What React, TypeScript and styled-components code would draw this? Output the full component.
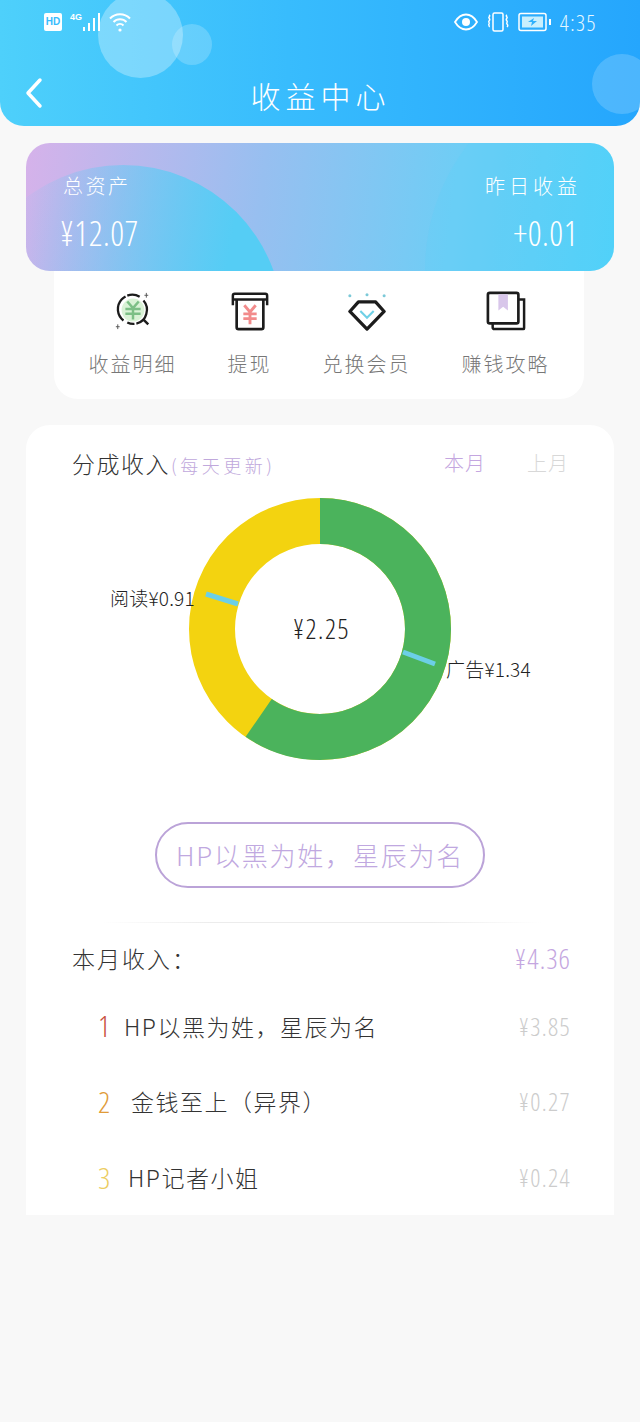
import React from 'react';
import styled, { createGlobalStyle } from 'styled-components';

const GlobalStyle = createGlobalStyle`
  html, body {
    margin: 0;
    padding: 0;
    background: #f8f8f8;
  }
  * {
    box-sizing: border-box;
  }
`;

const tabs = ['收益明细', '提现', '兑换会员', '赚钱攻略'];

const rows = [
  { rank: 1, color: '#c9523e', width: 26, title: 'HP以黑为姓，星辰为名', amount: '¥3.85' },
  { rank: 2, color: '#e09b38', width: 33, title: '金钱至上（异界）', amount: '¥0.27' },
  { rank: 3, color: '#eccd62', width: 30, title: 'HP记者小姐', amount: '¥0.24' },
];

const TabIcon = ({ index }: { index: number }) => {
  if (index === 0) {
    return (
      <svg width="40" height="40" viewBox="0 0 42 42" fill="none">
        <circle cx="21" cy="20" r="12" fill="#d9f2d6" />
        <path d="M15 11l6 7 6-7M13 19h16M13 24h16M21 18v12" stroke="#7cbf86" strokeWidth="2.6" />
        <path d="M32 10a15 15 0 0 1 3 14 14 14 0 0 1-20 9M11 31a15 15 0 0 1-2-22 15 15 0 0 1 19-3" stroke="#1c1c1c" strokeWidth="2.4" strokeDasharray="30 2 40 2" />
        <path d="M32 30l5 5" stroke="#1c1c1c" strokeWidth="2.6" />
        <path d="M35 2v5M33 4.500h4M5 35v5M3 37.500h4" stroke="#555" strokeWidth="1" />
      </svg>
    );
  }
  if (index === 1) {
    return (
      <svg width="40" height="40" viewBox="0 0 42 42" fill="none">
        <path d="M3 15V5a2 2 0 0 1 2-2h32a2 2 0 0 1 2 2v10" stroke="#1c1c1c" strokeWidth="2.6" />
        <path d="M4 9h34" stroke="#1c1c1c" strokeWidth="2.6" />
        <path d="M7 9v29a2 2 0 0 0 2 2h24a2 2 0 0 0 2-2V9" stroke="#1c1c1c" strokeWidth="2.8" />
        <path d="M15 15l6 7 6-7M14 24h14M14 29h14M21 22v13" stroke="#f28b8b" strokeWidth="3" />
      </svg>
    );
  }
  if (index === 2) {
    return (
      <svg width="40" height="40" viewBox="0 0 42 42" fill="none">
        <circle cx="3" cy="5" r="1.600" fill="#7cc9d8" />
        <circle cx="21" cy="4" r="1.600" fill="#7cc9d8" />
        <circle cx="39" cy="5" r="1.600" fill="#7cc9d8" />
        <path d="M12 11.500h18l9 10-18 18.500L3 21.500z" stroke="#1c1c1c" strokeWidth="3.400" strokeLinejoin="round" />
        <path d="M14 21l7 7 7-7" stroke="#6fd0e6" strokeWidth="2.2" />
      </svg>
    );
  }
  return (
    <svg width="40" height="40" viewBox="0 0 42 42" fill="none">
      <path d="M34 9h6v30a1 1 0 0 1-1 1H9a2 2 0 0 1-2-2v-4" stroke="#1c1c1c" strokeWidth="2.6" />
      <rect x="2" y="2" width="32" height="32" rx="2" stroke="#1c1c1c" strokeWidth="2.8" />
      <path d="M13 3.500v17l5-4 5 4V3.500z" fill="#d8c6ea" />
    </svg>
  );
};

const App = () => (
  <Page>
    <GlobalStyle />
    <Header>
      <BubbleLarge />
      <BubbleSmall />
      <BubbleEdge />
      <StatusBar>
        <StatusGroup>
          <HdBadge>HD</HdBadge>
          <NetworkLabel>4G</NetworkLabel>
          <svg width="20" height="20" viewBox="0 0 20 20" fill="#fff">
            <rect x="1" y="15" width="2" height="4" />
            <rect x="6" y="11" width="2" height="8" />
            <rect x="11" y="6" width="2" height="13" />
            <rect x="16" y="1" width="2" height="18" />
          </svg>
          <svg width="24" height="22" viewBox="0 0 24 22" fill="none" stroke="#fff" strokeWidth="2">
            <path d="M2 7.500a14 14 0 0 1 20 0M5.500 11a9 9 0 0 1 13 0M8.500 14.500a5 5 0 0 1 7 0" />
            <circle cx="12" cy="19" r="1.600" fill="#fff" stroke="none" />
          </svg>
        </StatusGroup>
        <StatusGroup $wide>
          <svg width="24" height="18" viewBox="0 0 24 18" fill="none" stroke="#fff" strokeWidth="1.800">
            <path d="M1 9c3-5 7-7.500 11-7.500S20 4 23 9c-3 5-7 7.500-11 7.500S4 14 1 9z" />
            <circle cx="12" cy="9" r="4" fill="#fff" stroke="none" />
          </svg>
          <svg width="24" height="20" viewBox="0 0 24 20" fill="none" stroke="#fff" strokeWidth="1.500">
            <rect x="7" y="1" width="10" height="18" rx="1.500" />
            <path d="M3 3c2 1-1 2 0 3s1 2 0 3 1 2 0 3 1 2 0 3M21 3c-2 1 1 2 0 3s-1 2 0 3-1 2 0 3 1 2 0 3" />
          </svg>
          <svg width="34" height="20" viewBox="0 0 34 20" fill="none">
            <rect x="1" y="1.500" width="27" height="17" rx="2" stroke="#fff" strokeWidth="1.500" />
            <rect x="4" y="4.500" width="21" height="11" fill="#c9effd" />
            <path d="M10 10l6-4-1 3h4l-6 5 1-4z" fill="#2fb0fc" />
            <rect x="31" y="7" width="2" height="6" fill="#fff" />
          </svg>
          <Clock>4:35</Clock>
        </StatusGroup>
      </StatusBar>
      <NavBar>
        <BackButton>
          <svg width="20" height="32" viewBox="0 0 20 32" fill="none" stroke="#fff" strokeWidth="3.500" strokeLinecap="round" strokeLinejoin="round">
            <path d="M16 3L4 16l12 13" />
          </svg>
        </BackButton>
        <NavTitle>收益中心</NavTitle>
      </NavBar>
    </Header>

    <BalanceCard>
      <BalanceColumn>
        <BalanceLabel>总资产</BalanceLabel>
        <BalanceValue>¥12.07</BalanceValue>
      </BalanceColumn>
      <BalanceColumn $right>
        <BalanceLabel $wide>昨日收益</BalanceLabel>
        <BalanceValue>+0.01</BalanceValue>
      </BalanceColumn>
    </BalanceCard>

    <TabCard>
      {tabs.map((tab, index) => (
        <TabItem key={tab}>
          <TabIcon index={index} />
          <TabLabel>{tab}</TabLabel>
        </TabItem>
      ))}
    </TabCard>

    <IncomePanel>
      <PanelHeader>
        <PanelTitle>
          分成收入<PanelHint>(每天更新)</PanelHint>
        </PanelTitle>
        <MonthSwitch>
          <MonthOption $active>本月</MonthOption>
          <MonthOption>上月</MonthOption>
        </MonthSwitch>
      </PanelHeader>

      <Chart>
        <svg width="264" height="264" viewBox="0 0 264 264">
          <circle cx="132" cy="132" r="108" fill="none" stroke="#f3d310" strokeWidth="46" />
          <circle
            cx="132"
            cy="132"
            r="108"
            fill="none"
            stroke="#4bb35c"
            strokeWidth="46"
            strokeDasharray={`${2 * Math.PI * 108 * (1.34 / 2.25)} ${2 * Math.PI * 108}`}
            transform="rotate(-90 132 132)"
          />
          <path d="M215 155l32 12M50 107L18 97" stroke="#6ccfe6" strokeWidth="5" />
        </svg>
        <ChartTotal>¥2.25</ChartTotal>
        <ChartLabel $left="-78px" $top="88px">阅读¥0.91</ChartLabel>
        <ChartLabel $left="258px" $top="159px">广告¥1.34</ChartLabel>
      </Chart>

      <AuthorPill>HP以黑为姓，星辰为名</AuthorPill>
      <Divider />

      <TotalRow>
        <TotalLabel>本月收入：</TotalLabel>
        <TotalAmount>¥4.36</TotalAmount>
      </TotalRow>

      {rows.map(row => (
        <BookRow key={row.rank}>
          <BookName>
            <Rank $color={row.color} $width={row.width}>{row.rank}</Rank>
            <BookTitle>{row.title}</BookTitle>
          </BookName>
          <BookAmount>{row.amount}</BookAmount>
        </BookRow>
      ))}
    </IncomePanel>
  </Page>
);

export default App;

const fontStack = `"Noto Sans CJK SC", sans-serif`;
const numberStack = `"Open Sans", "Noto Sans CJK SC", sans-serif`;

const Page = styled.div`
  width: 640px;
  min-height: 1422px;
  background: #f8f8f8;
  font-family: ${fontStack};
  font-weight: 300;
  display: flex;
  flex-direction: column;
`;

const Header = styled.header`
  position: relative;
  height: 126px;
  overflow: hidden;
  border-radius: 0 0 24px 24px;
  background: linear-gradient(90deg, #4ed0fb 0%, #38bcfd 45%, #25a6fd 100%);
`;

const BubbleLarge = styled.div`
  position: absolute;
  left: 98px;
  top: -8px;
  width: 85px;
  height: 86px;
  border-radius: 50%;
  background: rgba(255, 255, 255, 0.3);
`;

const BubbleSmall = styled.div`
  position: absolute;
  left: 172px;
  top: 24px;
  width: 40px;
  height: 41px;
  border-radius: 50%;
  background: rgba(255, 255, 255, 0.2);
`;

const BubbleEdge = styled.div`
  position: absolute;
  left: 592px;
  top: 54px;
  width: 60px;
  height: 60px;
  border-radius: 50%;
  background: rgba(255, 255, 255, 0.18);
`;

const StatusBar = styled.div`
  position: relative;
  height: 44px;
  padding: 0 44px;
  display: flex;
  align-items: center;
  justify-content: space-between;
`;

const StatusGroup = styled.div<{ $wide?: boolean }>`
  display: flex;
  align-items: center;
  gap: ${p => (p.$wide ? '8px' : '6px')};
`;

const HdBadge = styled.span`
  width: 18px;
  height: 18px;
  border-radius: 2px;
  background: #fff;
  color: #38bcfd;
  font: 700 10px/18px "Liberation Sans", sans-serif;
  text-align: center;
`;

const NetworkLabel = styled.span`
  align-self: flex-start;
  margin: 0 -6px 0 2px;
  color: #fff;
  font: 700 9px/12px "Liberation Sans", sans-serif;
`;

const Clock = styled.span`
  margin-right: -1px;
  color: #e6f7ff;
  font-family: ${numberStack};
  font-stretch: 75%;
  font-size: 22px;
  line-height: 24px;
  letter-spacing: 1.500px;
`;

const NavBar = styled.div`
  position: relative;
  height: 60px;
  margin-top: 21px;
  display: flex;
  align-items: center;
  justify-content: center;
`;

const BackButton = styled.div`
  position: absolute;
  left: 24px;
  top: 12px;
  display: flex;
`;

const NavTitle = styled.h1`
  margin: 0 0 0 1px;
  color: #fff;
  font-size: 30px;
  font-weight: 300;
  letter-spacing: 5px;
  line-height: 44px;
`;

const BalanceCard = styled.section`
  position: relative;
  overflow: hidden;
  height: 128px;
  margin: 17px 26px 0;
  padding: 26px 36px 0 34px;
  border-radius: 24px;
  display: flex;
  justify-content: space-between;
  background: linear-gradient(97deg, #d6b2ea 0%, #97bff0 40%, #6fcdf5 72%, #50d1f9 100%);
  &::before {
    content: '';
    position: absolute;
    left: -63px;
    top: 22px;
    width: 320px;
    height: 320px;
    border-radius: 50%;
    background: linear-gradient(100deg, rgba(85, 205, 245, 0) 15%, #55cdf5 75%);
  }
  &::after {
    content: '';
    position: absolute;
    left: 399px;
    top: -78px;
    width: 410px;
    height: 410px;
    border-radius: 50%;
    background: rgba(85, 208, 248, 0.2);
  }
`;

const BalanceColumn = styled.div<{ $right?: boolean }>`
  position: relative;
  z-index: 1;
  display: flex;
  flex-direction: column;
  gap: 12px;
  align-items: ${p => (p.$right ? 'flex-end' : 'flex-start')};
  color: #fff;
`;

const BalanceLabel = styled.div<{ $wide?: boolean }>`
  margin: ${p => (p.$wide ? '0 -3px 0 0' : '0 0 0 3px')};
  font-size: 20px;
  line-height: 34px;
  letter-spacing: ${p => (p.$wide ? '4px' : '2.500px')};
`;

const BalanceValue = styled.div`
  font-family: ${numberStack};
  font-stretch: 75%;
  font-size: 34px;
  line-height: 36px;
  letter-spacing: 0.500px;
`;

const TabCard = styled.section`
  height: 128px;
  margin: 0 56px 0 54px;
  padding-top: 20px;
  background: #fff;
  border-radius: 0 0 24px 24px;
  display: flex;
  justify-content: center;
  gap: 51px;
`;

const TabItem = styled.div`
  display: flex;
  flex-direction: column;
  align-items: center;
  gap: 18px;
`;

const TabLabel = styled.div`
  color: #777;
  font-size: 20px;
  line-height: 30px;
  letter-spacing: 2px;
`;

const IncomePanel = styled.section`
  height: 790px;
  margin: 26px 26px 0;
  padding: 18px 43px 0 46px;
  background: #fff;
  border-radius: 24px 24px 0 0;
  display: flex;
  flex-direction: column;
`;

const PanelHeader = styled.div`
  height: 40px;
  display: flex;
  align-items: center;
  justify-content: space-between;
`;

const PanelTitle = styled.div`
  color: #333;
  font-size: 23px;
  letter-spacing: 1.500px;
`;

const PanelHint = styled.span`
  margin-left: 1px;
  color: #c0a8dc;
  font-size: 18px;
  letter-spacing: 3.500px;
`;

const MonthSwitch = styled.div`
  padding-right: 2px;
  display: flex;
  gap: 41px;
`;

const MonthOption = styled.span<{ $active?: boolean }>`
  color: ${p => (p.$active ? '#c4a6e0' : '#d8d8d8')};
  font-size: 20px;
  letter-spacing: 1px;
`;

const Chart = styled.div`
  position: relative;
  width: 264px;
  height: 264px;
  margin: 14px 0 0 116px;
  svg {
    display: block;
  }
`;

const ChartTotal = styled.div`
  position: absolute;
  inset: 0;
  display: flex;
  align-items: center;
  justify-content: center;
  padding-left: 3px;
  color: #222;
  font-family: ${numberStack};
  font-stretch: 75%;
  font-size: 27px;
  letter-spacing: 1.500px;
`;

const ChartLabel = styled.span<{ $left: string; $top: string }>`
  position: absolute;
  left: ${p => p.$left};
  top: ${p => p.$top};
  color: #222;
  font-size: 19px;
  line-height: 26px;
  letter-spacing: 0.200px;
  white-space: nowrap;
`;

const AuthorPill = styled.div`
  width: 330px;
  height: 66px;
  margin: 61px 0 0 83px;
  border: 2px solid #bba3d8;
  border-radius: 33px;
  color: #c0a8e0;
  font-size: 26px;
  line-height: 62px;
  letter-spacing: 1.800px;
  text-align: center;
  white-space: nowrap;
`;

const Divider = styled.div`
  height: 1px;
  margin: 34px 30px 0;
  background: linear-gradient(90deg, rgba(235, 235, 235, 0), #ececec 25%, #ececec 75%, rgba(235, 235, 235, 0));
`;

const TotalRow = styled.div`
  height: 38px;
  margin: 16px 0 11px;
  display: flex;
  align-items: center;
  justify-content: space-between;
`;

const TotalLabel = styled.span`
  color: #333;
  font-size: 23px;
  letter-spacing: 2px;
`;

const TotalAmount = styled.span`
  color: #c4a6e0;
  font-family: ${numberStack};
  font-stretch: 75%;
  font-size: 28px;
  letter-spacing: 1px;
`;

const BookRow = styled.div`
  height: 76.500px;
  padding-left: 26px;
  display: flex;
  align-items: center;
  justify-content: space-between;
`;

const BookName = styled.div`
  display: flex;
  align-items: center;
`;

const Rank = styled.span<{ $color: string; $width: number }>`
  width: ${p => p.$width}px;
  color: ${p => p.$color};
  font-family: ${numberStack};
  font-stretch: 75%;
  font-size: 30px;
`;

const BookTitle = styled.span`
  color: #333;
  font-size: 23px;
  letter-spacing: 1.500px;
`;

const BookAmount = styled.span`
  color: #cccccc;
  font-family: ${numberStack};
  font-stretch: 75%;
  font-size: 25px;
  letter-spacing: 1.300px;
`;
